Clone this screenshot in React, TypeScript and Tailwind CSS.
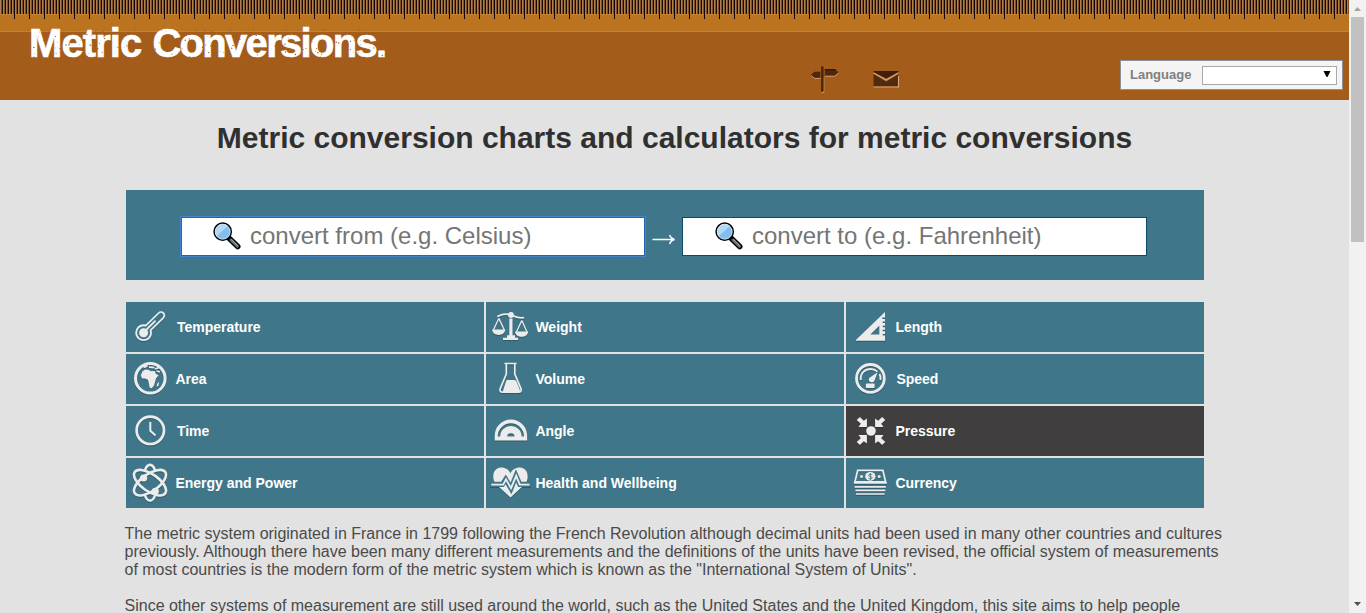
import type { ReactNode } from 'react';

const BG = '#407689';
const FG = '#ececec';

function Temperature() {
  return (
    <g>
      <g stroke={FG} fill={FG} strokeLinecap="round">
        <circle cx="17.6" cy="30.7" r="8.4" stroke="none" />
        <path d="M18.5 29.5 35 13.4" strokeWidth="8.4" />
      </g>
      <g stroke={BG} fill={BG} strokeLinecap="round">
        <circle cx="17.6" cy="30.7" r="6.5" stroke="none" />
        <path d="M18.5 29.5 35 13.4" strokeWidth="5" />
      </g>
      <circle cx="17.6" cy="30.7" r="4.5" fill={FG} />
      <path d="M18.5 29.5 29 19.2" stroke={FG} strokeWidth="1.8" strokeLinecap="round" />
    </g>
  );
}

function Area() {
  return (
    <g>
      <circle cx="24.3" cy="24.3" r="14.8" fill="none" stroke={FG} strokeWidth="3" />
      <path fill={FG} d="M16.4 17.4 19 15.6 23 16 24.5 17.2 28.6 17 30 20 32.6 21.2 30 24.6 29.2 27.5 28 31.6 25.6 34.4 23.6 33.6 22.9 29.5 22 25.8 19 24.6 16.2 24.4 14.8 21.5ZM31 30 33 27.8 32.6 31.5 30.8 33Z" />
      <path d="m17.5 13.4 4-1.5M23 13.2l5.500.5M29 15l4-1.500M30.500 17l3.500 1" stroke={FG} strokeWidth="1.7" fill="none" />
    </g>
  );
}

function Time() {
  return (
    <g fill="none" stroke={FG}>
      <circle cx="24.3" cy="24.3" r="13.7" strokeWidth="2.7" />
      <path d="M24.3 16v8.8l5.2 4.8" strokeWidth="2.1" />
    </g>
  );
}

function Energy() {
  return (
    <g fill="none" stroke={FG} strokeWidth="2.6">
      <path d="M18.9 12.6C20 8.800 22 6.900 24 6.900s4 1.900 5.100 5.700M18.9 37c1.100 3.700 3.100 5.600 5.100 5.600s4-1.900 5.100-5.600" />
      <ellipse cx="24" cy="24.7" rx="18.6" ry="8.6" transform="rotate(35 24 24.7)" />
      <ellipse cx="24" cy="24.7" rx="18.6" ry="8.6" transform="rotate(-35 24 24.7)" />
      <circle cx="17.6" cy="20" r="2.3" fill={FG} />
      <circle cx="29.3" cy="33.3" r="2.3" fill={FG} />
    </g>
  );
}

function Weight() {
  return (
    <g fill={FG}>
      <circle cx="25" cy="13" r="2.9" />
      <path d="M12 14.2c5-2.800 8.300-2.800 13-1.200 5 2 8 3.500 12.400 2.700" fill="none" stroke={FG} strokeWidth="1.8" strokeLinecap="round" />
      <path d="M23.3 16.4h3.2v17h-3.2zM21 33.3h8v2.4h3V38H17v-2.3h4z" />
      <path d="M12.8 16.4 7.4 28M12.8 16.4 18.3 28M35.8 18.6 30.4 30M35.8 18.6 41 30" fill="none" stroke={FG} strokeWidth="1.3" />
      <path d="M6.2 27.6h13c0 7.200-13 7.200-13 0ZM29.200 29.600h12.900c0 7-12.900 7-12.900 0Z" />
    </g>
  );
}

function Volume() {
  return (
    <g>
      <path d="M18.4 9.5h12.2M20.3 10v10.2l-6 14.2q-1.200 3.800 2.500 3.800h15.600q3.700 0 2.400-3.800l-6-14.200V10" fill="none" stroke={FG} strokeWidth="1.7" />
      <path d="M21 26h7.400q1.500 0 2.200 1.700l3.200 8q.8 2.500-1.500 2.500H18.200q-1.800 0-1-2l2.800-8.700q.3-1.500 1-1.500Z" fill={FG} />
    </g>
  );
}

function Angle() {
  return (
    <path fill={FG} fillRule="evenodd" d="M8.700 34.500V29.600a16.200 16.200 0 0 1 32.400 0v4.900ZM11.700 30.500h2.500a10.700 10.500 0 0 1 21.400 0h2.400a13.150 13.150 0 0 0-26.300 0Zm9.600 0h7.200a3.600 3.200 0 0 0-7.200 0Z" />
  );
}

function Health() {
  return (
    <g>
      <path fill={FG} d="M24.500 39.500 10 26.200C5.500 21.500 6 10 15 9.500c4.700 0 7.900 2.200 9.500 5.800 1.500-3.600 4.800-5.800 9.400-5.800 9 .5 9.500 12 5 16.700Z" />
      <path d="M4 26.400h12.400l3.300-5 5.300 9 5-12.500 3.800 8.500H45" fill="none" stroke={BG} strokeWidth="5.2" />
      <path d="M5.300 26.600h11.900l2.800-5.200 5 8.800 5.200-12.400 3.600 8.800h9.700" fill="none" stroke={FG} strokeWidth="1.900" />
    </g>
  );
}

function Length() {
  return (
    <path fill={FG} fillRule="evenodd" d="M9.6 38.200 39 10v5.400h-2.700v1.600H39v2.600h-2.300v1.500H39v2.600h-2.300v1.500H39v2.600h-2.300v1.500H39v2.600h-2.300v1.500H39v4.800q0 .6-.6.6H10.200ZM33.300 23.800 24.400 32.600h8.900Z" />
  );
}

function Speed() {
  return (
    <g fill="none" stroke={FG}>
      <circle cx="24.4" cy="24.4" r="13.9" strokeWidth="2.8" />
      <path d="M14.800 26c-.8-7.200 4.300-11 9.800-11 2.500 0 5 .9 6.700 2.600M33.500 20c1 2 1.300 4 .9 6" strokeWidth="1.900" />
      <path d="m31.600 18.200-3.100 8.500c-1.600 2.900-6 1.600-5.700-1.300.2-1.700 1.500-2.300 3-3.200Z" fill={FG} stroke="none" />
      <rect x="19.9" y="29.6" width="8.700" height="4.400" rx="1" fill={FG} stroke="none" />
    </g>
  );
}

function Pressure() {
  const arrow = 'M10.700 14.100 13.900 10.900 17.800 14.800 20.900 12.500V20.900H12.500L14.800 17.800Z';
  return (
    <g fill={FG}>
      <circle cx="25" cy="25" r="4.800" />
      <path d={arrow} />
      <path d={arrow} transform="matrix(-1 0 0 1 50 0)" />
      <path d={arrow} transform="matrix(1 0 0 -1 0 50)" />
      <path d={arrow} transform="matrix(-1 0 0 -1 50 50)" />
    </g>
  );
}

function Currency() {
  return (
    <g fill="none" stroke={FG}>
      <path d="M11.700 12.300h25.200l2.700 11.700H8.900Z" strokeWidth="1.800" />
      <path d="M8 25h32.800M8.600 28.900h31.200M9.400 32.400h30M10 36h28.600" strokeWidth="1.700" />
      <ellipse cx="24.300" cy="18.400" rx="5.200" ry="4.300" fill={FG} stroke="none" />
      <circle cx="15.500" cy="18.600" r="1.500" fill={FG} stroke="none" />
      <circle cx="33.200" cy="18.600" r="1.500" fill={FG} stroke="none" />
      <path d="M26.300 16.800c-1-1-3.700-1-3.700.5s3.600.9 3.600 2.500-2.800 1.400-3.800.4M24.400 15.300v6.600" stroke={BG} strokeWidth=".9" />
    </g>
  );
}

const categories: { label: string; icon: ReactNode; active?: boolean; pad?: string }[] = [
  { label: 'Temperature', icon: <Temperature />, pad: 'pl-[1.5px]' },
  { label: 'Weight', icon: <Weight /> },
  { label: 'Length', icon: <Length /> },
  { label: 'Area', icon: <Area /> },
  { label: 'Volume', icon: <Volume /> },
  { label: 'Speed', icon: <Speed />, pad: 'pl-px' },
  { label: 'Time', icon: <Time />, pad: 'pl-[1.5px]' },
  { label: 'Angle', icon: <Angle /> },
  { label: 'Pressure', icon: <Pressure />, active: true },
  { label: 'Energy and Power', icon: <Energy /> },
  { label: 'Health and Wellbeing', icon: <Health /> },
  { label: 'Currency', icon: <Currency /> },
];

function Magnifier() {
  return (
    <svg width="28" height="28" viewBox="0 0 28 28" fill="none" className="shrink-0">
      <path d="m16.4 16.4 8.300 8.200" stroke="#000" strokeWidth="5.6" strokeLinecap="round" />
      <path d="m18 18 6.400 6.300" stroke="#65727a" strokeWidth="3" strokeLinecap="round" />
      <path d="m18.600 17.600 6 6" stroke="#9aa5ab" strokeWidth="1" strokeLinecap="round" />
      <circle cx="9.7" cy="9.7" r="8.6" fill="#83beec" stroke="#000" strokeWidth="1.5" />
      <path d="M3.600 14.200A7.600 7.600 0 0 1 14.900 4.100Z" fill="#b5d8f3" />
      <circle cx="9.7" cy="9.7" r="7.4" stroke="#d5e6f2" strokeWidth=".7" />
    </svg>
  );
}

function Ruler() {
  return (
    <svg width="1349" height="32" className="block">
      <defs>
        <pattern id="ticks" width="15" height="32" patternUnits="userSpaceOnUse">
          <rect width="15" height="32" fill="#ba741f" />
          <path d="M0.5 0v14M3.5 0v14M6.5 0v14M9.5 0v14M12.5 0v14" stroke="#ab824e" />
          <path d="M1.500 0v14M4.500 0v14M7.500 0v14M10.500 0v14M13.500 0v14" stroke="#84501f" />
          <path d="M2.5 0v14M5.5 0v14M8.5 0v14M11.5 0v14" stroke="#1d0a07" />
          <path d="M14.5 0v19" stroke="#140306" />
          <path d="M1 14.5h12" stroke="#c68228" />
          <path d="M1 20.5h1M5 18.5h1M8 22.5h1M11 19.5h1M3 25.5h1M10 26.5h1" stroke="#c47a1c" />
          <path d="M0 31.5h15" stroke="#c98227" />
        </pattern>
      </defs>
      <rect width="1349" height="32" fill="url(#ticks)" />
    </svg>
  );
}

const specks = Array.from({ length: 190 }, (_, i) => {
  const a = Math.sin(i * 12.9898) * 43758.5453;
  const b = Math.sin(i * 78.233 + 4) * 24634.6345;
  return { x: (a - Math.floor(a)) * 356, y: 5 + (b - Math.floor(b)) * 30, r: 0.3 + (i % 4) * 0.14 };
});

function Logo() {
  return (
    <div className="relative h-[40px] w-[360px]">
      <span className="flex gap-[11px] pl-px text-[40px] leading-[38px] font-bold whitespace-nowrap text-white [-webkit-text-stroke:0.6px_white]">
        <span className="tracking-[-0.9px]">Metric</span>{' '}
        <span className="tracking-[-1.7px]">Conversions.</span>
      </span>
      <svg className="absolute top-0 left-0" width="360" height="40">
        {specks.map((s, i) => (
          <circle key={i} cx={s.x} cy={s.y} r={s.r} fill="#a35c1a" />
        ))}
      </svg>
    </div>
  );
}

function Signpost() {
  return (
    <svg width="30" height="28" viewBox="0 0 30 28">
      <path d="M11.300 27.700h2.500V12M1.500 10.700l3 2.600h6.300M15 11.200h10l3.700-3.200" stroke="#d59a68" fill="none" strokeWidth="1" />
      <path fill="#4b280e" d="M11 1.500h2.600V26.500H11zM10.300 6.800v6H4.500L1 9.800l3.500-3ZM14.800 4h10.100l3.600 3.200-3.600 3.400H14.800z" />
      <path fill="#32190a" d="M14.800 4h10.100l1.200 1.200H14.800z" />
    </svg>
  );
}

function Mail() {
  return (
    <svg width="27" height="18" viewBox="0 0 27 18">
      <path fill="#4f2b10" d="M.5 4 7 7.800l6.200 4L19.500 7.800 25.500 4v12.500H.5z" />
      <path fill="#40200c" d="M.5 1h25v1L13.200 8.500.5 2z" />
      <path d="M.5 3 13.200 10l12.300-7M.5 17h25V6" fill="none" stroke="#dba678" strokeWidth="1.100" />
    </svg>
  );
}

export default function App() {
  return (
    <div className="flex h-[613px] w-[1366px] overflow-hidden bg-[#e2e2e2] font-['Liberation_Sans',Arial,sans-serif]">
      <div className="flex w-[1349px] shrink-0 flex-col">
        <header className="h-[100px] bg-[#a35c1a]">
          <Ruler />
          <div className="-mt-2 flex h-[76px] items-start pl-7">
            <Logo />
            <div className="mt-[41px] ml-[422px]">
              <Signpost />
            </div>
            <div className="mt-[46px] ml-[33px]">
              <Mail />
            </div>
            <div className="mt-9 ml-[220px] flex h-[30px] w-[223px] items-center border border-[#8f8f97] bg-[#f4f4f4] pl-[9px]">
              <span className="text-[13px] font-bold text-[#808080]">Language</span>
              <span className="ml-auto mr-[5px] flex h-[19px] w-[135px] items-center justify-end border border-[#a9a9a9] bg-white pr-[5px]">
                <svg width="8" height="6" className="-mt-[2px]"><path d="M.5 0h7L4.500 6h-1Z" /></svg>
              </span>
            </div>
          </div>
        </header>

        <h1 className="mt-[19px] text-center text-[30px] leading-[37px] font-bold whitespace-nowrap text-[#303030]">
          Metric conversion charts and calculators for metric conversions
        </h1>

        <main className="ml-[126px] w-[1078px]">
          <section className="mt-[34px] flex h-[90px] items-start bg-[#407689] pt-[27px] pl-[55px]">
            <div className="flex h-[39px] w-[464px] items-center border border-[#2464b4] bg-white pb-[2px] pl-[31px] shadow-[0_0_0_1px_#4384cc]">
              <Magnifier />
              <span className="ml-[9px] text-2xl whitespace-nowrap text-[#757575]">convert from (e.g. Celsius)</span>
            </div>
            <svg width="37" height="39" viewBox="0 0 37 39" fill="none" stroke="#fff" strokeWidth="1.400">
              <path d="M7.500 22.500h22M24.500 18c1 2.500 2.500 4 5 4.500-2.500.5-4 2-5 4.500" />
            </svg>
            <div className="flex h-[39px] w-[465px] items-center border border-[#0c4a66] bg-white pb-[2px] pl-[32px]">
              <Magnifier />
              <span className="ml-[9px] text-2xl whitespace-nowrap text-[#757575]">convert to (e.g. Fahrenheit)</span>
            </div>
          </section>

          <nav className="mt-[22px] grid grid-cols-3 gap-[2px]">
            {categories.map((c) => (
              <a
                key={c.label}
                className={`flex h-[50px] items-center text-sm font-bold text-white ${c.active ? 'bg-[#413e3f]' : 'bg-[#407689]'}`}
              >
                <svg
                  width="49"
                  height="50"
                  viewBox="0 0 49 50"
                  fill="none"
                  className="shrink-0 drop-shadow-[0.5px_1px_0.5px_rgba(0,0,0,0.25)]"
                >
                  {c.icon}
                </svg>
                <span className={`ml-[0.4px] whitespace-nowrap ${c.pad ?? ''}`}>{c.label}</span>
              </a>
            ))}
          </nav>

          <div className="mt-[17px] -ml-[1.5px] flex flex-col gap-[18px] text-base leading-[18px] whitespace-nowrap text-[#4a4a4a]">
            <p>
              The metric system originated in France in 1799 following the French Revolution although decimal units had been used in many other countries and cultures
              <br />
              previously. Although there have been many different measurements and the definitions of the units have been revised, the official system of measurements
              <br />
              of most countries is the modern form of the metric system which is known as the "International System of Units".
            </p>
            <p>Since other systems of measurement are still used around the world, such as the United States and the United Kingdom, this site aims to help people</p>
          </div>
        </main>
      </div>

      <div className="flex w-[17px] shrink-0 flex-col items-center bg-[#f1f1f1]">
        <svg width="17" height="17"><path d="M5 11h7L8.500 7Z" fill="#a3a3a3" /></svg>
        <div className="h-[225px] w-[13px] bg-[#c1c1c1]" />
        <svg width="17" height="17" className="mt-auto"><path d="M5 6h7l-3.500 4Z" fill="#505050" /></svg>
      </div>
    </div>
  );
}
